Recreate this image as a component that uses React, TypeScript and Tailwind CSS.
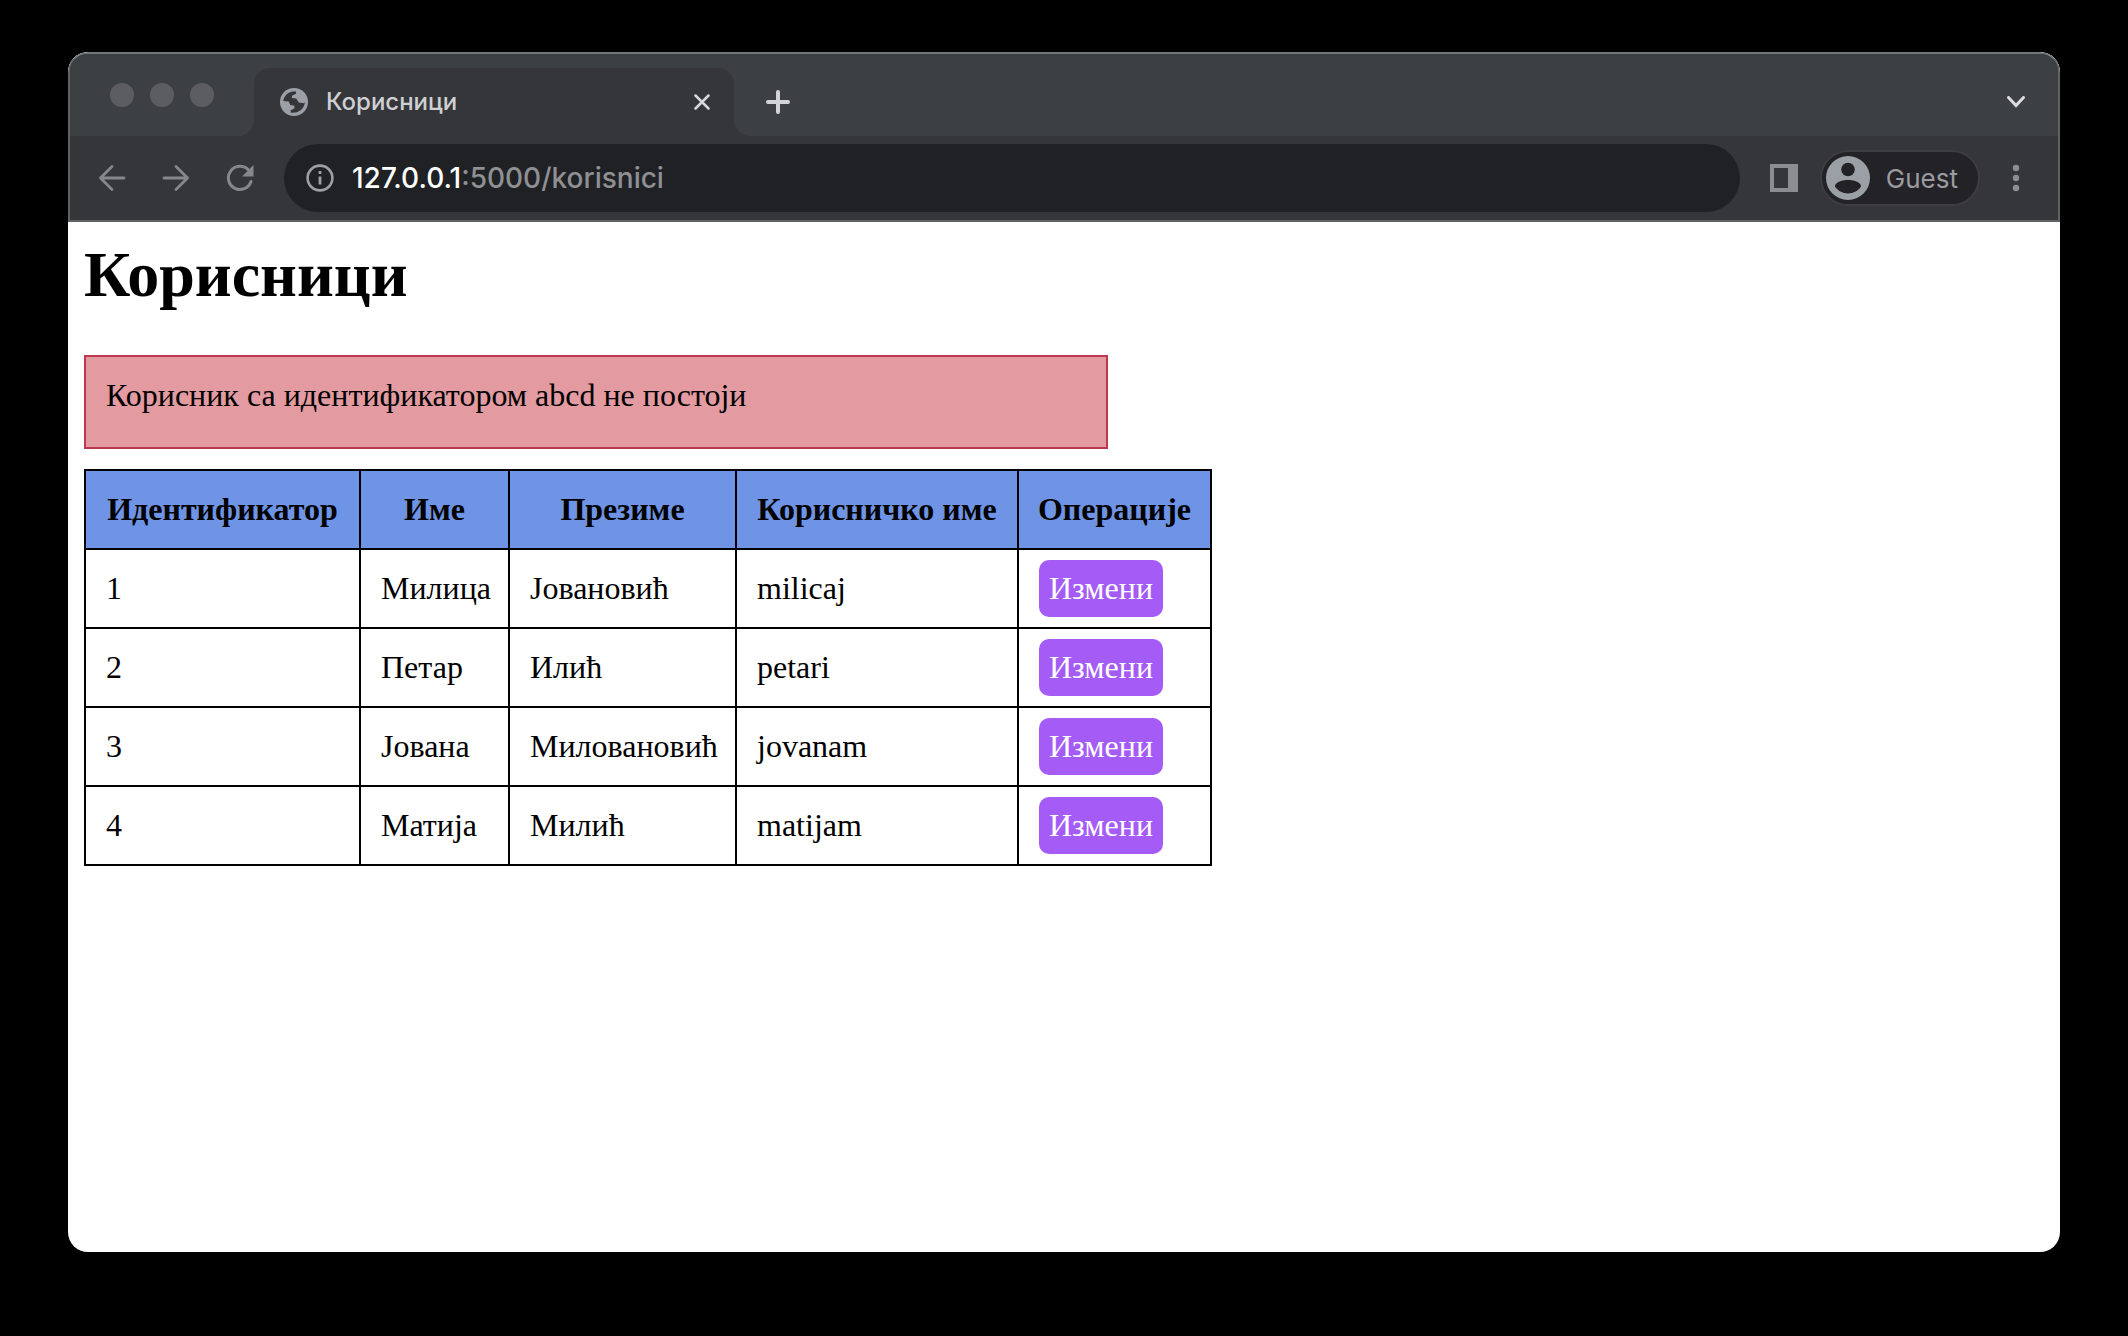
import type { ReactNode } from 'react';

type User = { id: number; first: string; last: string; username: string };

const users: User[] = [
  { id: 1, first: 'Милица', last: 'Јовановић', username: 'milicaj' },
  { id: 2, first: 'Петар', last: 'Илић', username: 'petari' },
  { id: 3, first: 'Јована', last: 'Миловановић', username: 'jovanam' },
  { id: 4, first: 'Матија', last: 'Милић', username: 'matijam' },
];

const headings = ['Идентификатор', 'Име', 'Презиме', 'Корисничко име', 'Операције'];

function IconButton({ label, className, children }: { label: string; className: string; children: ReactNode }) {
  return (
    <button type="button" aria-label={label} className={`flex size-8 shrink-0 items-center justify-center ${className}`}>
      {children}
    </button>
  );
}

function Globe() {
  return (
    <svg viewBox="0 0 28 28" className="size-7 shrink-0">
      <circle cx="14" cy="14" r="14" fill="#9aa0a6" />
      <path
        d="M3.200 13C4 8 7.500 4.200 12.500 3.400l3.500.1v2.300l-3.800 1.600-.4 2.600 4.400.6 2.600 4 5.200.6.900-1.400c-.2 5.400-4 9.600-9 10.800l-5.200.1v-2.500l3.600-1.800.2-2.600-4.200-.8-1.600-3.600z"
        fill="#35363a"
      />
    </svg>
  );
}

function TabStrip() {
  return (
    <div className="flex h-[82px] bg-[#35363a]">
      <div className="flex w-[184px] shrink-0 items-center gap-4 rounded-br-2xl bg-[#3d4042] pl-10">
        <span className="size-6 rounded-full bg-[#5c5d60]" />
        <span className="size-6 rounded-full bg-[#5c5d60]" />
        <span className="size-6 rounded-full bg-[#5c5d60]" />
      </div>
      <div className="w-[480px] shrink-0 bg-[#3d4042] pt-3.5">
        <div className="flex h-full items-center rounded-t-2xl bg-[#35363a] pr-4 pl-[26px]">
          <Globe />
          <span className="flex-1 pl-[18px] font-['Inter'] text-2xl font-medium text-[#ced0d3]">Корисници</span>
          <IconButton label="Затвори картицу" className="text-[#d6d8db]">
            <svg viewBox="0 0 16 16" className="size-4" stroke="currentColor" strokeWidth="2.5" strokeLinecap="round">
              <path d="M1.500 1.500l13 13M14.500 1.500l-13 13" />
            </svg>
          </IconButton>
        </div>
      </div>
      <div className="flex flex-1 items-center justify-between rounded-bl-2xl bg-[#3d4042] pt-3.5 pr-[26px] pl-7">
        <IconButton label="Нова картица" className="text-[#d2d4d7]">
          <svg viewBox="0 0 24 24" className="size-6" stroke="currentColor" strokeWidth="4" strokeLinecap="round">
            <path d="M2 12h20M12 2v20" />
          </svg>
        </IconButton>
        <IconButton label="Претражи картице" className="text-[#dadce0]">
          <svg viewBox="0 0 18 12" className="h-3 w-[18px]" fill="none" stroke="currentColor" strokeWidth="3" strokeLinecap="round">
            <path d="M1.500 1.500L9 9.500l7.500-8" />
          </svg>
        </IconButton>
      </div>
    </div>
  );
}

function Toolbar() {
  return (
    <div className="flex h-[84px] items-center bg-[#35363a] px-[26px] font-['Inter']">
      <div className="flex shrink-0 gap-8">
        <IconButton label="Назад" className="text-[#85878a]">
          <svg viewBox="0 0 28 28" className="size-7" fill="none" stroke="currentColor" strokeWidth="2.800" strokeLinecap="round" strokeLinejoin="round">
            <path d="M26 14H2.500M14 2.500L2.500 14 14 25.500" />
          </svg>
        </IconButton>
        <IconButton label="Напред" className="text-[#85878a]">
          <svg viewBox="0 0 28 28" className="size-7" fill="none" stroke="currentColor" strokeWidth="2.800" strokeLinecap="round" strokeLinejoin="round">
            <path d="M2 14h23.500M14 2.500L25.500 14 14 25.500" />
          </svg>
        </IconButton>
        <IconButton label="Поново учитај" className="text-[#85878a]">
          <svg viewBox="0 0 28 28" className="size-7" fill="none">
            <path d="M25 17.500A11.600 11.600 0 1 1 22.500 6" stroke="currentColor" strokeWidth="3" strokeLinecap="round" />
            <path d="M27.500 1v11.500H16z" fill="currentColor" />
          </svg>
        </IconButton>
      </div>
      <div className="ml-7 flex h-[68px] flex-1 items-center rounded-full bg-[#202124] pl-[22px]">
        <svg viewBox="0 0 28 28" className="size-7 shrink-0" fill="none">
          <circle cx="14" cy="14" r="12.400" stroke="#9aa0a6" strokeWidth="2.600" />
          <path d="M14 12.500v8M14 7v3" stroke="#9aa0a6" strokeWidth="2.800" />
        </svg>
        <p className="pl-[18px] text-[28px] font-medium text-[#8f9094]">
          <span className="text-white">127.0.0.1</span>:5000/korisnici
        </p>
      </div>
      <div className="flex shrink-0 items-center pl-7">
        <IconButton label="Бочна трака" className="text-[#8c8d90]">
          <svg viewBox="0 0 28 28" className="size-7">
            <path d="M0 0h28v28H0zM4 4v20h14V4z" fill="currentColor" fillRule="evenodd" />
          </svg>
        </IconButton>
        <button type="button" className="ml-5 flex h-14 items-center rounded-full border-2 border-[#3e3d41] bg-[#232227] pr-5 pl-1 text-[26px] text-[#9a9ca0]">
          <svg viewBox="0 0 44 44" className="mr-4 size-11">
            <circle cx="22" cy="22" r="22" fill="#9aa0a6" />
            <circle cx="22" cy="13.500" r="6.800" fill="#232227" />
            <path d="M9 30.500c0-4 6-6.500 13-6.500s13 2.500 13 6.500c-2.500 4-7.500 7-13 7s-10.500-3-13-7z" fill="#232227" />
          </svg>
          Guest
        </button>
        <IconButton label="Мени" className="ml-5 text-[#8c8d90]">
          <svg viewBox="0 0 8 28" className="h-7 w-2" fill="currentColor">
            <circle cx="4" cy="4" r="3.200" />
            <circle cx="4" cy="14" r="3.200" />
            <circle cx="4" cy="24" r="3.200" />
          </svg>
        </IconButton>
      </div>
    </div>
  );
}

export default function App() {
  return (
    <div className="flex min-h-screen flex-col bg-black px-[68px] pt-[52px] pb-[84px]">
      <div className="flex flex-1 flex-col overflow-hidden rounded-[20px] bg-white">
        <header className="overflow-hidden rounded-t-[20px] border-2 border-[#5f6164] border-t-[#757575] bg-[#3d4042]">
          <TabStrip />
          <Toolbar />
        </header>
        <main className="p-4 font-['Liberation_Serif',serif] text-[32px] leading-[37px] text-black">
          <h1 className="mb-[43px] text-[64px] leading-[74px] font-bold">Корисници</h1>
          <div role="alert" className="mb-5 h-[94px] w-full max-w-5xl border-2 border-[#bd394f] bg-[#e39aa1] p-5">
            Корисник са идентификатором abcd не постоји
          </div>
          <table className="w-[1128px] table-fixed border-collapse whitespace-nowrap">
            <colgroup>
              <col className="w-[275px]" />
              <col className="w-[149px]" />
              <col className="w-[227px]" />
              <col className="w-[282px]" />
              <col />
            </colgroup>
            <thead>
              <tr className="bg-[#6f94e6]">
                {headings.map((heading) => (
                  <th key={heading} scope="col" className="border-2 border-black px-4 py-5 font-bold">
                    {heading}
                  </th>
                ))}
              </tr>
            </thead>
            <tbody>
              {users.map((user) => (
                <tr key={user.id}>
                  <td className="border-2 border-black py-5 pl-5">{user.id}</td>
                  <td className="border-2 border-black py-5 pl-5">{user.first}</td>
                  <td className="border-2 border-black py-5 pl-5">{user.last}</td>
                  <td className="border-2 border-black py-5 pl-5">{user.username}</td>
                  <td className="border-2 border-black pl-5">
                    <a href="#izmeni" className="block w-fit rounded-[10px] bg-[#a55cf7] p-2.5 text-white">
                      Измени
                    </a>
                  </td>
                </tr>
              ))}
            </tbody>
          </table>
        </main>
      </div>
    </div>
  );
}
